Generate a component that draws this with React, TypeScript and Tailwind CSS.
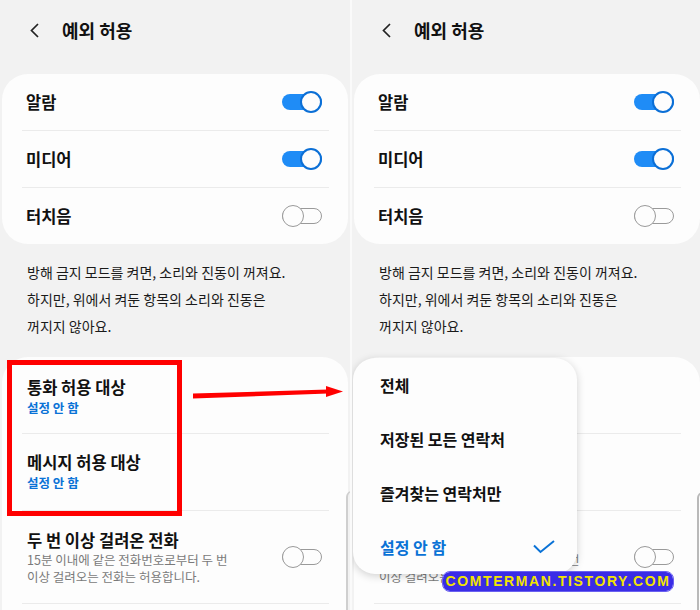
import React from "react";

const KR = { fontFamily: '"Noto Sans CJK KR", "Noto Sans", sans-serif' };

const Toggle = ({ on }: { on: boolean }) => (
  <div className="relative h-[22px] w-[40px] shrink-0">
    <div
      className={
        on
          ? "absolute inset-x-0 top-[3px] h-[16px] rounded-full bg-[#1f8cf6]"
          : "absolute inset-x-0 top-[3px] h-[16px] rounded-full border-[1.5px] border-[#9a9a9a] bg-[#fdfdfd]"
      }
    />
    <div
      className={
        on
          ? "absolute right-0 top-0 size-[22px] rounded-full border-2 border-[#0b6fd6] bg-[#fdfdfd]"
          : "absolute left-0 top-0 size-[22px] rounded-full border-[1.5px] border-[#9a9a9a] bg-[#fdfdfd]"
      }
    />
  </div>
);

const Divider = () => <div className="ml-[20px] mr-[19px] h-px bg-[#ebebeb]" />;

const ToggleRow = ({ label, on }: { label: string; on: boolean }) => (
  <div className="flex h-[56px] items-center justify-between pl-[24px] pr-[26px]">
    <span className="text-[16.5px] font-semibold text-[#111]">{label}</span>
    <Toggle on={on} />
  </div>
);

// covered: the row sits under the popup in the right panel, nothing of it shows
const PickRow = ({ title, pt, covered }: { title: string; pt: string; covered?: boolean }) => (
  <div className={`h-[76px] pl-[25px] ${pt}`}>
    {!covered && (
      <>
        <div className="text-[16.5px] leading-[22px] font-semibold text-[#111]">{title}</div>
        <div className="text-[12.5px] leading-[20px] font-bold text-[#0a72d6]">설정 안 함</div>
      </>
    )}
  </div>
);

const Panel = ({ children, covered }: { children?: React.ReactNode; covered?: boolean }) => (
  <div className="relative h-[610px] w-[350px] shrink-0 overflow-hidden bg-[#f2f2f2]" style={KR}>
    <div className="flex h-[60px] items-center pl-[29px]">
      <svg width="11" height="15" viewBox="0 0 11 15" fill="none">
        <path d="M9 1 L2.5 7.5 L9 14" stroke="#222" strokeWidth="1.7" />
      </svg>
      <span className="ml-[22px] text-[18px] font-bold text-[#111]">예외 허용</span>
    </div>

    <div className="mx-[2px] mt-[14px] rounded-[26px] bg-[#fdfdfd]">
      <ToggleRow label="알람" on />
      <Divider />
      <ToggleRow label="미디어" on />
      <Divider />
      <ToggleRow label="터치음" on={false} />
    </div>

    <p className="mt-[15px] px-[27px] text-[14px] leading-[27px] text-[#1a1a1a]">
      방해 금지 모드를 켜면, 소리와 진동이 꺼져요.
      <br />
      하지만, 위에서 켜둔 항목의 소리와 진동은
      <br />
      꺼지지 않아요.
    </p>

    <div className="mx-[2px] mt-[17px] rounded-t-[26px] bg-[#fdfdfd] pb-[20px]">
      <PickRow title="통화 허용 대상" pt="pt-[19px]" covered={covered} />
      <Divider />
      <PickRow title="메시지 허용 대상" pt="pt-[17px]" covered={covered} />
      <Divider />
      <div className="flex h-[92px] items-center justify-between pl-[25px] pr-[26px]">
        <div>
          <div className="text-[16.5px] leading-[22px] font-semibold text-[#111]">두 번 이상 걸려온 전화</div>
          <div className="text-[12.5px] leading-[17px] text-[#7a7a7a]">
            15분 이내에 같은 전화번호로부터 두 번
            <br />
            이상 걸려오는 전화는 허용합니다.
          </div>
        </div>
        <Toggle on={false} />
      </div>
      <Divider />
    </div>
    {children}
  </div>
);

const Option = ({ label }: { label: string }) => (
  <div className="flex h-[54px] items-center pl-[27px] text-[16px] font-semibold text-[#111]">{label}</div>
);

export default function App() {
  return (
    <div className="relative flex h-[610px] w-[700px] overflow-hidden bg-[#fafafa]">
      <Panel>
        <div className="absolute left-[7px] top-[360px] h-[156px] w-[175px] border-[5px] border-[#ff0000]" />
        <div className="absolute left-[346px] top-[491px] h-[130px] w-[8px] rounded-tl-[6px] border-l-2 border-t border-[#cfcfcf]" />
      </Panel>
      <div className="w-[2px] shrink-0 bg-[#fafafa]" />
      <Panel covered>
        <div className="absolute left-[1px] top-[358px] w-[224px] rounded-[22px] bg-[#fdfdfd] shadow-[0_2px_8px_rgba(0,0,0,0.18)]">
          <Option label="전체" />
          <Option label="저장된 모든 연락처" />
          <Option label="즐겨찾는 연락처만" />
          <div className="flex h-[54px] items-center justify-between pl-[27px] pr-[22px]">
            <span className="text-[16px] font-bold text-[#0a72d6]">설정 안 함</span>
            <svg width="22" height="14" viewBox="0 0 22 14" fill="none">
              <path d="M1 5.5 L7.5 12 L21 1" stroke="#0a72d6" strokeWidth="2" />
            </svg>
          </div>
        </div>
        <div className="absolute left-[345px] top-[492px] h-[130px] w-[6px] rounded-tl-[6px] border-l-2 border-t border-[#b9b9b9]" />
      </Panel>

      <svg className="absolute left-[185px] top-[380px]" width="165" height="25" viewBox="0 0 165 25">
        <polygon points="8,13.5 143,9.5 143,13.5 8,18.5" fill="#ff0000" />
        <polygon points="141,6 158,11.5 141,17" fill="#ff0000" />
      </svg>

      <div
        className="absolute left-[443px] top-[572px] flex h-[19px] w-[230px] items-center justify-center rounded-[7px] bg-[#3a2ce6] text-[14px] font-bold tracking-[1.6px] text-[#f2e400] outline outline-1 outline-[#6a60f0]"
        style={{ fontFamily: '"Liberation Sans", Arial, sans-serif' }}
      >
        COMTERMAN.TISTORY.COM
      </div>
    </div>
  );
}
